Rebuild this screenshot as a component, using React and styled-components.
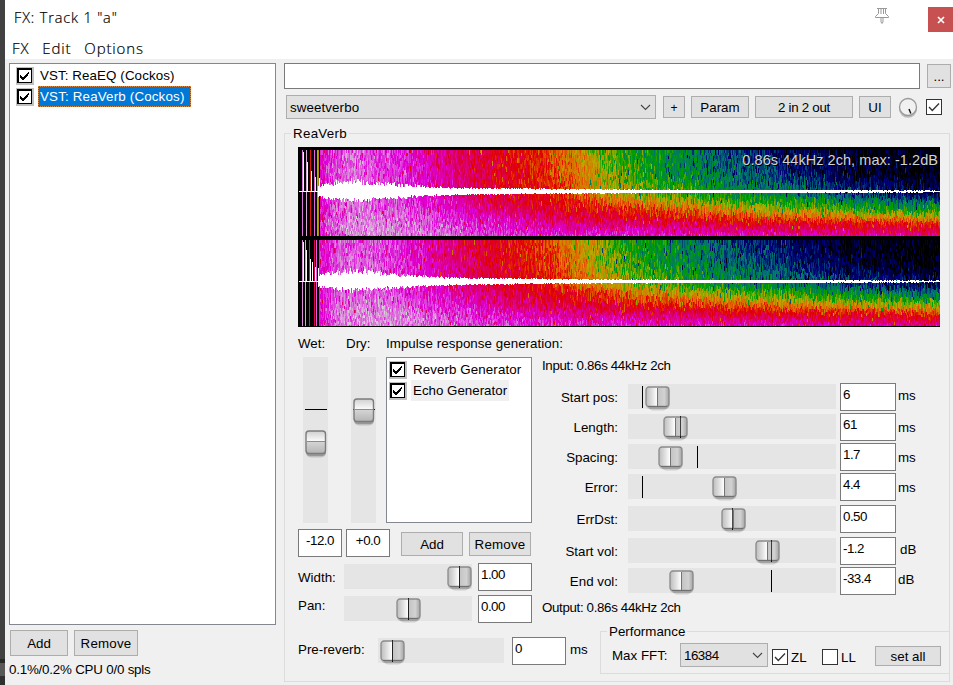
import React, { useMemo } from "react";
import styled, { createGlobalStyle, css } from "styled-components";

const GlobalStyle = createGlobalStyle`
  *, *::before, *::after { box-sizing: border-box; }
  html, body { margin: 0; padding: 0; overflow: hidden; }
  body { font-family: "Liberation Sans", Arial, sans-serif; font-size: 13.33px; line-height: 16px; color: #000; }
`;

const Desktop = styled.div`
  display: flex;
  width: 953px;
  height: 685px;
  background: linear-gradient(#414141 0 659px, #282828 659px 663px, #585858 663px 676px, #303030 676px);
  padding-left: 5px;
`;
const Window = styled.div`
  display: flex;
  flex-direction: column;
  width: 948px;
  background: #f0f0f0;
`;
const TitleBar = styled.header`
  display: flex;
  height: 36px;
  background: #fff;
  padding-left: 9px;
  font: 300 14.5px/36px "Open Sans", "Noto Sans", sans-serif;
`;
const TitleText = styled.span`
  flex: 1;
  letter-spacing: 0.85px;
  color: #000;
  -webkit-text-stroke: 0.2px #000;
`;
const PinIcon = styled.svg`
  width: 16px;
  height: 18px;
  margin: 7px 38px 0 0;
`;
const CloseButton = styled.button`
  width: 25px;
  height: 25px;
  margin-top: 7px;
  padding: 0;
  border: 0;
  background: #c75050;
  display: grid;
  place-items: center;
`;
const MenuBar = styled.nav`
  display: flex;
  gap: 13px;
  height: 23px;
  padding-left: 7px;
  background: #fff;
  font: 300 15px/25px "Open Sans", "Noto Sans", sans-serif;
  letter-spacing: 0.85px;
  color: #000;
  -webkit-text-stroke: 0.2px #000;
`;
const Content = styled.main`
  display: flex;
  flex: 1;
  padding: 4px 0 0 4px;
`;
const ChainColumn = styled.section`
  display: flex;
  flex-direction: column;
  width: 267px;
  margin-right: 8px;
`;
const ListBox = styled.ul`
  list-style: none;
  margin: 0;
  padding: ${(p) => p.$pad || "1px 0 0 6px"};
  width: ${(p) => p.$w}px;
  height: ${(p) => p.$h}px;
  border: 1px solid #828790;
  background: #fff;
`;
const ListItem = styled.li`
  display: flex;
  align-items: center;
  height: 21px;
`;
const ItemLabel = styled.span`
  height: 21px;
  line-height: 21px;
  margin-left: 4px;
  padding: 0 ${(p) => (p.$state === "selected" ? 6 : 2)}px 0 2px;
  letter-spacing: ${(p) => p.$ls || 0}px;
  white-space: nowrap;
  ${(p) => p.$state === "selected" && css`
    background: #0078d7;
    color: #fff;
    outline: 1px dotted #d98a48;
    outline-offset: -1px;
  `}
  ${(p) => p.$state === "inactive" && css`background: #f0f0f0;`}
`;
const ListCheck = styled.svg`
  flex: none;
  width: 18px;
  height: 18px;
`;
const ButtonRow = styled.div`
  display: flex;
  gap: 6px;
  padding: 5px 0 0 1px;
`;
const Button = styled.button`
  flex: none;
  width: ${(p) => p.$w}px;
  height: ${(p) => p.$h || 24}px;
  margin: ${(p) => p.$m || 0};
  padding: 1px 0 0;
  border: 1px solid #adadad;
  background: #e1e1e1;
  font: inherit;
  font-size: ${(p) => p.$size || 13.33}px;
  letter-spacing: ${(p) => p.$ls || 0}px;
  color: #000;
`;
const Label = styled.span`
  flex: none;
  width: ${(p) => (p.$w ? p.$w + "px" : "auto")};
  height: 16px;
  line-height: 18px;
  margin: ${(p) => p.$m || 0};
  letter-spacing: ${(p) => p.$ls || 0}px;
  text-align: ${(p) => p.$align || "left"};
  white-space: nowrap;
`;
const PluginColumn = styled.section`
  display: flex;
  flex-direction: column;
  width: 669px;
`;
const TopRow = styled.div`
  display: flex;
  align-items: center;
  gap: 7px;
  height: 26px;
`;
const CommentField = styled.input`
  width: 636px;
  height: 26px;
  border: 1px solid #7a7a7a;
  background: #fff;
`;
const PresetRow = styled.div`
  display: flex;
  align-items: center;
  height: 24px;
  gap: 6px;
  margin: 6px 0 0 2px;
`;
const Combo = styled.div`
  display: flex;
  flex: none;
  align-items: center;
  justify-content: space-between;
  width: ${(p) => p.$w}px;
  height: 24px;
  margin: ${(p) => p.$m || 0};
  padding: 0 4px 0 3px;
  border: 1px solid #adadad;
  background: #e1e1e1;
  line-height: 18px;
  letter-spacing: ${(p) => p.$ls || 0}px;
`;
const ComboText = styled.span`
  padding-top: 1px;
`;
const Knob = styled.svg`
  flex: none;
  width: 20px;
  height: 22px;
  margin: 2px 0 0 1px;
`;
const CheckBox = styled.svg`
  flex: none;
  width: 16px;
  height: 16px;
  margin: ${(p) => p.$m || 0};
`;
const Group = styled.div`
  position: relative;
  width: ${(p) => p.$w}px;
  height: ${(p) => p.$h}px;
  margin: ${(p) => p.$m};
  border: 1px solid #dcdcdc;
  padding: ${(p) => p.$p || 0};
`;
const Legend = styled.span`
  position: absolute;
  top: -8px;
  left: 6px;
  padding: 0 2px;
  background: #f0f0f0;
  letter-spacing: ${(p) => p.$ls || 0}px;
`;
const Display = styled.div`
  position: relative;
  width: 642px;
  height: 180px;
  background: #000;
`;
const Plot = styled.svg`
  display: block;
  width: 642px;
  height: 180px;
`;
const DisplayInfo = styled.span`
  position: absolute;
  top: 4px;
  right: 2px;
  font-size: 14.5px;
  line-height: 18px;
  letter-spacing: 0.05px;
  color: #d2d2d2;
  text-shadow: 1px 1px 0 #000;
  white-space: nowrap;
`;
const Controls = styled.div`
  display: flex;
  gap: 10px;
`;
const MixColumn = styled.div`
  display: flex;
  flex-direction: column;
  width: 234px;
`;
const GeneratorColumn = styled.div`
  display: flex;
  flex-direction: column;
  width: 407px;
`;
const Row = styled.div`
  display: flex;
  flex: none;
  height: ${(p) => p.$h || 28}px;
  margin-top: ${(p) => p.$mt || 0}px;
  align-items: ${(p) => p.$align || "flex-start"};
`;
const Track = styled.div`
  position: relative;
  flex: none;
  width: ${(p) => p.$w}px;
  height: ${(p) => p.$h || 25}px;
  margin: ${(p) => p.$m || "1px 0 0"};
  background: #e5e5e5;
`;
const Mark = styled.i`
  position: absolute;
  background: #000;
  ${(p) => p.$vertical
    ? css`left: 2px; top: ${p.$at}px; width: 22px; height: 1px;`
    : css`top: 2px; left: ${p.$at}px; width: 1px; height: 22px;`}
  ${(p) => p.$over && css`opacity: 0.7;`}
`;
const ThumbArt = styled.svg`
  position: absolute;
  overflow: visible;
  ${(p) => p.$vertical
    ? css`left: 2px; top: ${p.$at}px; width: 22px; height: 28px;`
    : css`top: 2px; left: ${p.$at}px; width: 26px; height: 25px;`}
`;
const Value = styled.div`
  flex: none;
  width: ${(p) => p.$w}px;
  height: 28px;
  padding: ${(p) => (p.$center ? "3px 0 0" : "3px 2px 0")};
  margin: ${(p) => p.$m || 0};
  border: 1px solid #7a7a7a;
  background: #fff;
  text-align: ${(p) => (p.$center ? "center" : "left")};
  letter-spacing: -0.5px;
`;
const HiddenDefs = styled.svg`
  position: absolute;
  width: 0;
  height: 0;
`;

function Thumb({ vertical, at }) {
  return vertical ? (
    <ThumbArt $vertical $at={at} viewBox="0 0 22 28">
      <rect x="1" y="5" width="20" height="22.5" rx="5" fill="#000" opacity=".17" />
      <rect x="1" y="4" width="20" height="22" rx="4" fill="#000" opacity=".2" />
      <rect x="1" y="1" width="19.5" height="22.5" rx="3" fill="url(#metalV)" stroke="#7c7c7c" strokeWidth="1.4" />
      <path d="M2 11.5H20" stroke="#8c8c8c" />
    </ThumbArt>
  ) : (
    <ThumbArt $at={at} viewBox="0 0 26 25">
      <rect x="3" y="4" width="20" height="20.5" rx="5" fill="#000" opacity=".14" />
      <rect x="1" y="3" width="23.5" height="20" rx="4" fill="#000" opacity=".16" />
      <rect x="1" y="1" width="23" height="19.5" rx="3" fill="url(#metalH)" stroke="#8a8a8a" strokeWidth="1.3" />
      <path d="M3 20.5H22" stroke="#707070" />
      <path d="M12.5 2V20" stroke="#747474" />
    </ThumbArt>
  );
}

function Slider({ vertical, w, h, m, mark, at }) {
  const covered = !vertical && mark > at && mark < at + 24;
  return (
    <Track $w={w} $h={h} $m={m}>
      <Mark $vertical={vertical} $at={mark} />
      <Thumb vertical={vertical} at={at} />
      {covered && <Mark $at={mark} $over />}
    </Track>
  );
}

const Gradients = () => (
  <HiddenDefs>
    <defs>
      <linearGradient id="metalH">
        <stop offset="0" stopColor="#bdbdbd" />
        <stop offset=".25" stopColor="#dedede" />
        <stop offset=".48" stopColor="#fff" />
        <stop offset=".52" stopColor="#c4c4c4" />
        <stop offset=".8" stopColor="#d2d2d2" />
        <stop offset="1" stopColor="#a4a4a4" />
      </linearGradient>
      <linearGradient id="metalV" x2="0" y2="1">
        <stop offset="0" stopColor="#cfcfcf" />
        <stop offset=".44" stopColor="#fafafa" />
        <stop offset=".5" stopColor="#d4d4d4" />
        <stop offset="1" stopColor="#b4b4b4" />
      </linearGradient>
    </defs>
  </HiddenDefs>
);

const ClassicCheck = () => (
  <ListCheck viewBox="0 0 18 18" shapeRendering="crispEdges">
    <path d="M0 0H18V18H0z" fill="#c0c0c0" />
    <path d="M1 1H16V16H1z" fill="#000" />
    <path d="M3 3H15V15H3z" fill="#fff" />
    <path d="M4 8h1v3h-1zM5 9h1v3h-1zM6 10h1v3h-1zM7 10h1v3h-1zM8 9h1v3h-1zM9 8h1v3h-1zM10 7h1v3h-1zM11 6h1v3h-1zM12 5h1v2h-1z" fill="#000" />
  </ListCheck>
);

const FlatCheck = ({ on, m }) => (
  <CheckBox $m={m} viewBox="0 0 16 16">
    <rect x=".5" y=".5" width="15" height="15" fill="#fff" stroke="#333" />
    {on && <path d="M3 8l3.3 3.5L13 4.5" fill="none" stroke="#333" strokeWidth="1.3" />}
  </CheckBox>
);

const Chevron = () => (
  <svg width="11" height="7" viewBox="0 0 11 7">
    <path d="M1 1l4.5 4.5L10 1" fill="none" stroke="#444" strokeWidth="1.1" />
  </svg>
);

const PALETTE = [
  [0, 0, 0], [0, 0, 120], [0, 112, 112], [0, 160, 0], [184, 168, 0], [224, 100, 0],
  [224, 0, 0], [220, 0, 100], [224, 0, 216], [220, 110, 220], [214, 214, 214],
];
const STEPS = 5;
const XS = [20, 50, 90, 130, 170, 205, 240, 275, 320, 400, 480, 560, 642];
const YS = [0, 0.25, 0.5, 0.58, 0.67, 0.75, 0.84, 1];
const LEVELS = [
  [7.9, 8.9, 8.5, 7.7, 6.8, 6.2, 5.6, 4.6, 3.2, 2.1, 1, 0.15, 0],
  [8, 9, 8.5, 7.8, 6.9, 6.2, 5.8, 4.9, 3.4, 2.4, 1.4, 0.4, 0],
  [8, 9, 8.5, 8, 7.1, 6.4, 6, 5.3, 4, 3.1, 2.3, 1.5, 0.8],
  [8.1, 9, 8.6, 8.1, 7.4, 6.7, 6.3, 5.8, 5.1, 3.7, 3.1, 2.5, 1.8],
  [8.1, 9.1, 8.8, 8.3, 7.7, 7.1, 6.5, 6.2, 5.7, 4.9, 3.8, 3.2, 2.9],
  [8.2, 9.1, 9, 8.5, 8, 7.5, 7, 6.6, 6.2, 5.7, 5.1, 4.5, 4.1],
  [8.2, 9.3, 9.2, 8.8, 8.4, 7.9, 7.5, 7.2, 7.1, 6.7, 6.2, 6, 5.5],
  [8.2, 9.2, 9.3, 9, 8.7, 8.5, 8.3, 8.2, 8.4, 8.1, 8, 7.7, 7.6],
];
const ENVELOPE = [[20, 6], [30, 8], [42, 9.5], [52, 11], [70, 9.5], [100, 7], [130, 4.6], [170, 3.2], [230, 2.4], [300, 1.7], [400, 1.2], [520, 0.85], [642, 0.5]];

function randomizer(seed) {
  let s = seed;
  return () => {
    s = (s + 0x6d2b79f5) | 0;
    let t = Math.imul(s ^ (s >>> 15), 1 | s);
    t = (t + Math.imul(t ^ (t >>> 7), 61 | t)) ^ t;
    return ((t ^ (t >>> 14)) >>> 0) / 4294967296;
  };
}
function locate(stops, v) {
  let i = 0;
  while (i < stops.length - 2 && v > stops[i + 1]) i++;
  return [i, Math.min(1, Math.max(0, (v - stops[i]) / (stops[i + 1] - stops[i])))];
}
function levelAt(x, y) {
  const [i, fx] = locate(XS, x);
  const [j, fy] = locate(YS, y);
  const top = LEVELS[j][i] * (1 - fx) + LEVELS[j][i + 1] * fx;
  const bottom = LEVELS[j + 1][i] * (1 - fx) + LEVELS[j + 1][i + 1] * fx;
  return top * (1 - fy) + bottom * fy;
}
function colorOf(level) {
  const [i, f] = locate(PALETTE.map((_, k) => k), level);
  return `rgb(${PALETTE[i].map((c, k) => Math.round(c * (1 - f) + PALETTE[i + 1][k] * f)).join(",")})`;
}
function buildChannel(seed, top) {
  const rnd = randomizer(seed);
  const cells = {};
  for (let x = 22; x < 642; x++) {
    const column = (rnd() - 0.5) * 0.4;
    for (let y = 0; y < 86; ) {
      const h = y > 64 ? 3 : 3 + Math.floor(rnd() * 2) * 2;
      const height = Math.min(h, 86 - y);
      const spike = rnd() < 0.05 ? -rnd() * 1.8 : 0;
      const noise = (rnd() + rnd() + rnd() - 1.5) * 0.8;
      const level = Math.max(0, Math.min(10, levelAt(x, y / 86) + column + noise + spike));
      const key = Math.round(level * STEPS);
      if (key > 0) (cells[key] ||= []).push(`M${x} ${top + y}h1v${height}h-1z`);
      y += height;
    }
  }
  const stops = ENVELOPE.map((e) => e[0]);
  let wave = "";
  for (let x = 20; x < 642; x++) {
    const [i, f] = locate(stops, x);
    const amp = ENVELOPE[i][1] * (1 - f) + ENVELOPE[i + 1][1] * f;
    const up = Math.round(amp * (0.6 + rnd() * 0.6));
    const down = Math.round(amp * (0.55 + rnd() * 0.5));
    wave += `M${x} ${top + 41 - up}h1v${up + down + 1}h-1z`;
  }
  return { cells, wave };
}
const PULSES = [
  [[4, 0, "#dc78dc"], [5, 2, "#fff"], [8, 0, "#d8a8d8"], [9, 12, "#fff"], [12, 0, "#e01800"], [13, 21, "#fff"], [16, 0, "#dc64dc"], [17, 27, "#fff"], [19, 0, "#d878d8"], [20, 0, "#a89000"], [21, 28, "#fff"]],
  [[4, 0, "#dc90dc"], [5, 2, "#fff"], [7, 0, "#c8a8d8"], [8, 10, "#fff"], [11, 0, "#dc00b0"], [12, 19, "#fff"], [14, 22, "#fff"], [16, 0, "#e00050"], [17, 27, "#fff"], [18, 0, "#dc60dc"], [20, 28, "#fff"], [21, 0, "#d05000"]],
];

function Spectrogram() {
  const channels = useMemo(() => [buildChannel(11, 3), buildChannel(47, 93)], []);
  return (
    <Plot viewBox="0 0 642 180" shapeRendering="crispEdges">
      {channels.map((channel, c) => {
        const top = c ? 93 : 3;
        return (
          <g key={c}>
            {Object.entries(channel.cells).map(([key, parts]) => (
              <path key={key} d={parts.join("")} fill={colorOf(key / STEPS)} />
            ))}
            {PULSES[c].map(([x, start, fill]) => (
              <rect key={x} x={x} y={top + start} width="1" height={(start ? 42 : 86) - start} fill={fill} />
            ))}
            <rect x="1" y={top + 41} width="641" height="1" fill="#fff" />
            <path d={channel.wave} fill="#fff" />
          </g>
        );
      })}
    </Plot>
  );
}

const PARAMETERS = [
  { label: "Start pos:", value: "6", unit: "ms", mark: 14, at: 17, mt: 10, um: "4px 0 0 2px" },
  { label: "Length:", value: "61", unit: "ms", mark: 52, at: 35, mt: 2 },
  { label: "Spacing:", value: "1.7", unit: "ms", mark: 69, at: 30, mt: 2 },
  { label: "Error:", value: "4.4", unit: "ms", mark: 14, at: 84, mt: 2 },
  { label: "ErrDst:", value: "0.50", unit: "", mark: 104, at: 93, mt: 4 },
  { label: "Start vol:", value: "-1.2", unit: "dB", mark: 143, at: 127, mt: 4, um: "4px 0 0 4px" },
  { label: "End vol:", value: "-33.4", unit: "dB", mark: 143, at: 41, mt: 2, um: "4px 0 0 2px" },
];

export default function App() {
  return (
    <Desktop>
      <GlobalStyle />
      <Gradients />
      <Window>
        <TitleBar>
          <TitleText>FX: Track 1 "a"</TitleText>
          <PinIcon viewBox="0 0 16 18" fill="none" stroke="#999">
            <path d="M3 1.5H13M4.5 2V6.5L1.5 9.5V10.5H14.5V9.5L11.5 6.5V2M7 2V7M9.5 2V7M7 11V15L8 16.5L9 15V11" />
          </PinIcon>
          <CloseButton aria-label="Close">
            <svg width="8" height="8" viewBox="0 0 8 8"><path d="M1 1l6 6M7 1L1 7" stroke="#fff" strokeWidth="1.7" /></svg>
          </CloseButton>
        </TitleBar>
        <MenuBar><span>FX</span><span>Edit</span><span>Options</span></MenuBar>
        <Content>
          <ChainColumn>
            <ListBox $w={267} $h={562}>
              <ListItem><ClassicCheck /><ItemLabel $ls={0.1}>VST: ReaEQ (Cockos)</ItemLabel></ListItem>
              <ListItem><ClassicCheck /><ItemLabel $state="selected" $ls={0.18}>VST: ReaVerb (Cockos)</ItemLabel></ListItem>
            </ListBox>
            <ButtonRow>
              <Button $w={58} $h={26}>Add</Button>
              <Button $w={64} $h={26} $ls={0.2}>Remove</Button>
            </ButtonRow>
            <Label $m="5px 0 0" $ls={-0.2}>0.1%/0.2% CPU 0/0 spls</Label>
          </ChainColumn>
          <PluginColumn>
            <TopRow>
              <CommentField aria-label="Comment" />
              <Button $w={24}>...</Button>
            </TopRow>
            <PresetRow>
              <Combo $w={370} $m="0 1px 0 0" $ls={0.1}><ComboText>sweetverbo</ComboText><Chevron /></Combo>
              <Button $w={22} $h={22} $size={12}>+</Button>
              <Button $w={58} $h={22}>Param</Button>
              <Button $w={98} $h={22} $ls={-0.3}>2 in 2 out</Button>
              <Button $w={32} $h={22}>UI</Button>
              <Knob viewBox="0 0 20 22">
                <circle cx="10" cy="11.8" r="9" fill="#999" opacity=".6" />
                <circle cx="10" cy="10" r="8.5" fill="#f1f1f1" stroke="#999" strokeWidth="1.3" />
                <path d="M11 12l1.8 4.5" stroke="#111" strokeWidth="1.4" />
              </Knob>
              <FlatCheck on m="0 0 0 2px" />
            </PresetRow>
            <Group $w={666} $h={549} $m="14px 0 0" $p="13px 0 0 13px">
              <Legend $ls={0.3}>ReaVerb</Legend>
              <Display>
                <Spectrogram />
                <DisplayInfo>0.86s 44kHz 2ch, max: -1.2dB</DisplayInfo>
              </Display>
              <Controls>
                <MixColumn>
                  <Row $mt={8} $h={16}>
                    <Label $w={48}>Wet:</Label>
                    <Label $w={40}>Dry:</Label>
                    <Label $ls={0.05}>Impulse response generation:</Label>
                  </Row>
                  <Row $mt={6} $h={166}>
                    <Slider vertical w={25} h={166} m="0 0 0 5px" mark={52} at={73} />
                    <Slider vertical w={25} h={166} m="0 10px 0 23px" mark={52} at={41} />
                    <ListBox $w={146} $h={166} $pad="1px 0 0 2px">
                      <ListItem><ClassicCheck /><ItemLabel $ls={0.1}>Reverb Generator</ItemLabel></ListItem>
                      <ListItem><ClassicCheck /><ItemLabel $state="inactive">Echo Generator</ItemLabel></ListItem>
                    </ListBox>
                  </Row>
                  <Row $mt={6}>
                    <Value $w={44} $center>-12.0</Value>
                    <Value $w={44} $center $m="0 11px 0 4px">+0.0</Value>
                    <Button $w={62} $m="3px 6px 0 0">Add</Button>
                    <Button $w={62} $m="3px 0 0" $ls={0.2}>Remove</Button>
                  </Row>
                  <Row $mt={6}>
                    <Label $w={46} $m="6px 0 0">Width:</Label>
                    <Slider w={128} mark={115} at={103} />
                    <Value $w={54} $m="0 0 0 6px">1.00</Value>
                  </Row>
                  <Row $mt={4}>
                    <Label $w={46} $m="2px 0 0">Pan:</Label>
                    <Slider w={128} mark={64} at={52} />
                    <Value $w={54} $m="0 0 0 6px">0.00</Value>
                  </Row>
                  <Row $mt={14}>
                    <Label $w={80} $m="4px 0 0">Pre-reverb:</Label>
                    <Slider w={126} mark={14} at={2} />
                    <Value $w={54} $m="0 4px 0 8px">0</Value>
                    <Label $m="4px 0 0">ms</Label>
                  </Row>
                </MixColumn>
                <GeneratorColumn>
                  <Label $m="30px 0 0" $ls={-0.35}>Input: 0.86s 44kHz 2ch</Label>
                  {PARAMETERS.map((p) => (
                    <Row key={p.label} $mt={p.mt}>
                      <Label $w={76} $m="6px 10px 0 0" $align="right">{p.label}</Label>
                      <Slider w={208} mark={p.mark} at={p.at} />
                      <Value $w={56} $m="0 0 0 4px">{p.value}</Value>
                      <Label $m={p.um || "6px 0 0 2px"}>{p.unit}</Label>
                    </Row>
                  ))}
                  <Label $m="4px 0 0" $ls={-0.35}>Output: 0.86s 44kHz 2ch</Label>
                  <Group $w={350} $h={43} $m="16px 0 0 58px">
                    <Legend>Performance</Legend>
                    <Row $mt={11} $h={24}>
                      <Label $m="4px 0 0 11px" $w={68}>Max FFT:</Label>
                      <Combo $w={88} $ls={-0.5}><ComboText>16384</ComboText><Chevron /></Combo>
                      <FlatCheck on m="6px 3px 0 4px" />
                      <Label $m="6px 0 0" $w={31}>ZL</Label>
                      <FlatCheck m="6px 3px 0 0" />
                      <Label $m="6px 0 0" $w={34}>LL</Label>
                      <Button $w={66} $h={20} $m="3px 0 0">set all</Button>
                    </Row>
                  </Group>
                </GeneratorColumn>
              </Controls>
            </Group>
          </PluginColumn>
        </Content>
      </Window>
    </Desktop>
  );
}
